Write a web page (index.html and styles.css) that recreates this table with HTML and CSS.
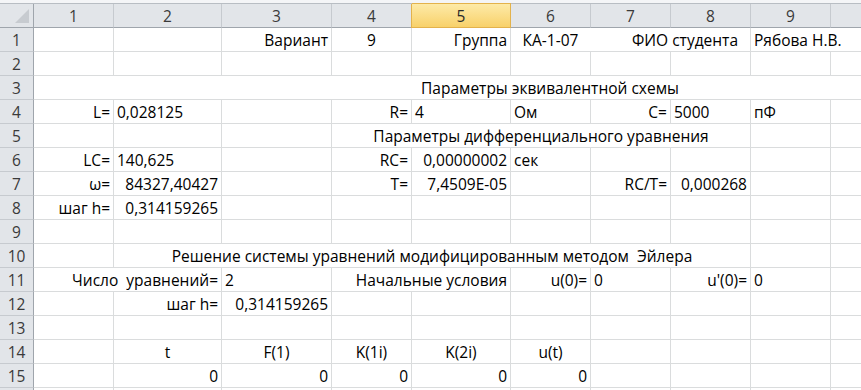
FILE: index.html
```html
<!DOCTYPE html>
<html lang="ru">
<head>
  <meta charset="UTF-8">
  <title>Лист1</title>
  <link rel="stylesheet" href="styles.css">
</head>
<body>
  <div class="topbar"></div>
  <div class="sheet">
    <!-- заголовки столбцов -->
    <div class="hd corner"><svg width="14" height="14" viewBox="0 0 14 14"><polygon points="0,14 14,0 14,14" fill="#c7cbd0"/></svg></div>
    <div class="hd">1</div><div class="hd">2</div><div class="hd">3</div><div class="hd">4</div>
    <div class="hd active">5</div><div class="hd">6</div><div class="hd">7</div><div class="hd">8</div>
    <div class="hd">9</div><div class="hd edge"></div>

    <!-- 1 -->
    <div class="rh">1</div>
    <div class="c"></div><div class="c"></div>
    <div class="c r">Вариант</div>
    <div class="c m">9</div>
    <div class="c r">Группа</div>
    <div class="c s3 pair"><span class="grp">КА-1-07</span><span class="fio">ФИО студента</span></div>
    <div class="c s2 edge">Рябова Н.В.</div>

    <!-- 2 -->
    <div class="rh">2</div>
    <div class="c"></div><div class="c"></div><div class="c"></div><div class="c"></div><div class="c"></div>
    <div class="c"></div><div class="c"></div><div class="c"></div><div class="c"></div><div class="c edge"></div>

    <!-- 3 -->
    <div class="rh">3</div>
    <div class="c s10 title edge">Параметры эквивалентной схемы</div>

    <!-- 4 -->
    <div class="rh">4</div>
    <div class="c r">L=</div>
    <div class="c">0,028125</div>
    <div class="c"></div>
    <div class="c r">R=</div>
    <div class="c">4</div>
    <div class="c">Ом</div>
    <div class="c r">C=</div>
    <div class="c">5000</div>
    <div class="c">пФ</div>
    <div class="c edge"></div>

    <!-- 5 -->
    <div class="rh">5</div>
    <div class="c"></div><div class="c"></div><div class="c"></div>
    <div class="c s5 m">Параметры дифференциального уравнения</div>
    <div class="c"></div><div class="c edge"></div>

    <!-- 6 -->
    <div class="rh">6</div>
    <div class="c r">LC=</div>
    <div class="c">140,625</div>
    <div class="c"></div>
    <div class="c r">RC=</div>
    <div class="c r">0,00000002</div>
    <div class="c">сек</div>
    <div class="c"></div><div class="c"></div><div class="c"></div><div class="c edge"></div>

    <!-- 7 -->
    <div class="rh">7</div>
    <div class="c r">ω=</div>
    <div class="c r">84327,40427</div>
    <div class="c"></div>
    <div class="c r">T=</div>
    <div class="c r">7,4509E-05</div>
    <div class="c"></div>
    <div class="c r">RC/T=</div>
    <div class="c r">0,000268</div>
    <div class="c"></div><div class="c edge"></div>

    <!-- 8 -->
    <div class="rh">8</div>
    <div class="c r">шаг h=</div>
    <div class="c r">0,314159265</div>
    <div class="c"></div><div class="c"></div><div class="c"></div><div class="c"></div>
    <div class="c"></div><div class="c"></div><div class="c"></div><div class="c edge"></div>

    <!-- 9 -->
    <div class="rh">9</div>
    <div class="c"></div><div class="c"></div><div class="c"></div><div class="c"></div><div class="c"></div>
    <div class="c"></div><div class="c"></div><div class="c"></div><div class="c"></div><div class="c edge"></div>

    <!-- 10 -->
    <div class="rh">10</div>
    <div class="c"></div>
    <div class="c s7 m">Решение системы уравнений модифицированным методом  Эйлера</div>
    <div class="c"></div><div class="c edge"></div>

    <!-- 11 -->
    <div class="rh">11</div>
    <div class="c s2 r">Число  уравнений=</div>
    <div class="c">2</div>
    <div class="c s2 r">Начальные условия</div>
    <div class="c r">u(0)=</div>
    <div class="c">0</div>
    <div class="c r">u'(0)=</div>
    <div class="c">0</div>
    <div class="c edge"></div>

    <!-- 12 -->
    <div class="rh">12</div>
    <div class="c"></div>
    <div class="c r">шаг h=</div>
    <div class="c r">0,314159265</div>
    <div class="c"></div><div class="c"></div><div class="c"></div><div class="c"></div>
    <div class="c"></div><div class="c"></div><div class="c edge"></div>

    <!-- 13 -->
    <div class="rh">13</div>
    <div class="c"></div><div class="c"></div><div class="c"></div><div class="c"></div><div class="c"></div>
    <div class="c"></div><div class="c"></div><div class="c"></div><div class="c"></div><div class="c edge"></div>

    <!-- 14 -->
    <div class="rh">14</div>
    <div class="c"></div>
    <div class="c m">t</div>
    <div class="c m">F(1)</div>
    <div class="c m">K(1i)</div>
    <div class="c m">K(2i)</div>
    <div class="c m">u(t)</div>
    <div class="c"></div><div class="c"></div><div class="c"></div><div class="c edge"></div>

    <!-- 15 -->
    <div class="rh">15</div>
    <div class="c"></div>
    <div class="c r">0</div>
    <div class="c r">0</div>
    <div class="c r">0</div>
    <div class="c r">0</div>
    <div class="c r">0</div>
    <div class="c"></div><div class="c"></div><div class="c"></div><div class="c edge"></div>

    <!-- 16 (видна только верхняя кромка) -->
    <div class="rh last"></div>
    <div class="c last"></div><div class="c last"></div><div class="c last"></div><div class="c last"></div><div class="c last"></div>
    <div class="c last"></div><div class="c last"></div><div class="c last"></div><div class="c last"></div><div class="c last edge"></div>
  </div>
</body>
</html>
```

FILE: styles.css
```css
/* Лист в стиле Excel */
html, body {
  height: 390px;
}

body {
  margin: 0;
  overflow: hidden;
  background: #fff;
  font-family: 'Open Sans', 'Noto Sans', sans-serif;
  font-size: 15.5px;
  color: #000;
}

.topbar {
  height: 3px;
  background: #f4f5f7;
  border-bottom: 1px solid #b8bdc3;
}

.sheet {
  display: grid;
  grid-template-columns: 34px 80px 108px 110px 80px 99px 80px 80px 80px 80px 1fr;
  grid-template-rows: repeat(16, 24px) 2px;
  width: 861px;
}

.sheet > div {
  box-sizing: border-box;
  display: flex;
  align-items: flex-end;
  white-space: pre;
  overflow: visible;
}

/* заголовки */
.hd {
  background: #e2e5e9;
  border-right: 1px solid #c6cacf;
  border-bottom: 1px solid #9fa5ac;
  justify-content: center;
  color: #3a3a3a;
}

.hd.corner {
  border-right-color: #9fa5ac;
  justify-content: flex-end;
  padding: 0 4px 4px 0;
}

.hd.active {
  background: linear-gradient(#fdeaa8, #f8d16a);
  border-right-color: #e3b24c;
  border-bottom-color: #e3b24c;
  box-shadow: -1px 0 0 #e3b24c, 0 -1px 0 #e3b24c;
  color: #2a2a2a;
}

.rh {
  background: #e2e5e9;
  border-right: 1px solid #9fa5ac;
  border-bottom: 1px solid #c6cacf;
  justify-content: center;
  color: #3a3a3a;
}

/* ячейки */
.c {
  border-right: 1px solid #dadcdd;
  border-bottom: 1px solid #dadcdd;
  padding: 0 3px;
}

.sheet > .edge {
  border-right: 0;
}

.sheet > .last {
  border-bottom: 0;
}

.r { justify-content: flex-end; }
.m { justify-content: center; }

.s2 { grid-column: span 2; }
.s3 { grid-column: span 3; }
.s5 { grid-column: span 5; }
.s7 { grid-column: span 7; }
.s10 { grid-column: span 10; }

.pair {
  padding: 0 12px 0 0;
}

.pair .grp {
  width: 79px;
  text-align: center;
}

.pair .fio {
  margin-left: auto;
}

.title {
  justify-content: center;
  padding-left: 208px;
}
```
